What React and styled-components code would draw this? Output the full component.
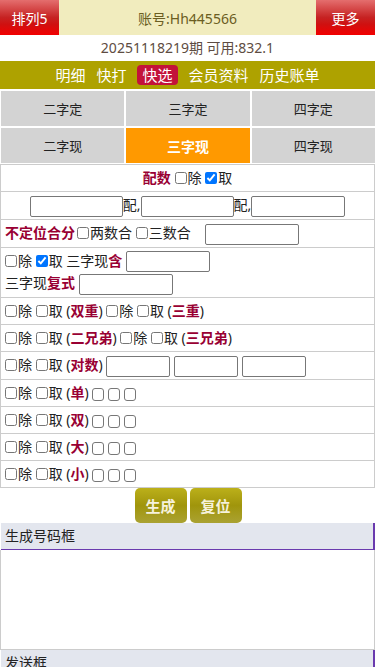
import { createGlobalStyle } from "styled-components";
import styled from "styled-components";

const GlobalStyle = createGlobalStyle`
    body {
        margin: 0;
        background: #fff;
        font-family: "Noto Sans", "Noto Sans CJK SC", sans-serif;
        color: #222;
    }
    * {
        box-sizing: border-box;
    }
`;

const navItems = ["明细", "快打", "快选", "会员资料", "历史账单"];
const tabs = ["二字定", "三字定", "四字定", "二字现", "三字现", "四字现"];

export default function App() {
    return (
        <Page>
            <GlobalStyle />
            <TopBar>
                <RedButton>排列5</RedButton>
                <Account>账号:Hh445566</Account>
                <RedButton>更多</RedButton>
            </TopBar>
            <InfoLine>20251118219期 可用:832.1</InfoLine>
            <NavBar>
                {navItems.map((item) => (
                    <NavItem key={item} $active={item === "快选"}>{item}</NavItem>
                ))}
            </NavBar>
            <TabGrid>
                {tabs.map((tab) => (
                    <Tab key={tab} $active={tab === "三字现"}>{tab}</Tab>
                ))}
            </TabGrid>

            <Table>
                <Row $center>
                    <Em>配数</Em> <Check />除 <Check defaultChecked />取
                </Row>
                <Row $center>
                    <TextBox $w={93} />配,<TextBox $w={93} />配,<TextBox $w={94} />
                </Row>
                <Row>
                    <Em>不定位合分</Em><Check $gap />两数合 <Check />三数合<TextBox $w={94} $ml={14} />
                </Row>
                <Row $tall>
                    <Check />除 <Check defaultChecked />取 三字现<Em>含</Em> <TextBox $w={84} /><br />
                    三字现<Em>复式</Em> <TextBox $w={94} />
                </Row>
                <Row>
                    <Check />除 <Check />取 (<Em>双重</Em>) <Check />除 <Check />取 (<Em>三重</Em>)
                </Row>
                <Row>
                    <Check />除 <Check />取 (<Em>二兄弟</Em>) <Check />除 <Check />取 (<Em>三兄弟</Em>)
                </Row>
                <Row>
                    <Check />除 <Check />取 (<Em>对数</Em>) <TextBox $w={64} /> <TextBox $w={64} /> <TextBox $w={64} />
                </Row>
                {["单", "双", "大", "小"].map((k) => (
                    <Row key={k}>
                        <Check />除 <Check />取 (<Em>{k}</Em>) <Mini /><Mini /><Mini />
                    </Row>
                ))}
            </Table>

            <ButtonBar>
                <ActionButton>生成</ActionButton>
                <ActionButton>复位</ActionButton>
            </ButtonBar>

            <PanelHead>生成号码框</PanelHead>
            <Area />
            <PanelHead>发送框</PanelHead>
            <Area />
        </Page>
    );
}

const Page = styled.div`
    width: 375px;
`;

const TopBar = styled.div`
    display: flex;
    height: 35px;
`;

const RedButton = styled.div`
    width: 59px;
    display: flex;
    align-items: center;
    justify-content: center;
    font-size: 14px;
    color: #fff;
    background: linear-gradient(#e46e6e 0%, #c62222 50%, #d01010 70%, #f20000 100%);
`;

const Account = styled.div`
    flex: 1;
    display: flex;
    align-items: center;
    justify-content: center;
    font-size: 14px;
    color: #6b5d22;
    background-color: #f1ecbe;
`;

const InfoLine = styled.div`
    height: 26px;
    line-height: 26px;
    text-align: center;
    font-size: 14px;
    color: #5e4c42;
`;

const NavBar = styled.div`
    height: 28px;
    display: flex;
    align-items: center;
    justify-content: center;
    gap: 11px;
    background-color: #aea200;
`;

const NavItem = styled.span`
    font-size: 15px;
    line-height: 20px;
    color: #fff;
    padding: 0 ${(p) => (p.$active ? "5px" : "0")};
    border-radius: 4px;
    background-color: ${(p) => (p.$active ? "#c3123a" : "transparent")};
`;

const TabGrid = styled.div`
    display: grid;
    grid-template-columns: 1fr 1fr 1fr;
    grid-auto-rows: 35px;
    gap: 2px;
    padding: 2px 0 0 1px;
    margin-bottom: 1px;
`;

const Tab = styled.div`
    display: flex;
    align-items: center;
    justify-content: center;
    font-size: ${(p) => (p.$active ? "14px" : "13px")};
    font-weight: ${(p) => (p.$active ? "bold" : "normal")};
    color: ${(p) => (p.$active ? "#fff" : "#222")};
    background-color: ${(p) => (p.$active ? "#ff9900" : "#d3d3d3")};
`;

const Table = styled.div`
    border: 1px solid #ccc;
    border-bottom: none;
`;

const Row = styled.div`
    font-size: 14px;
    color: #222;
    line-height: 22px;
    padding: 2px 4px;
    text-align: ${(p) => (p.$center ? "center" : "left")};
    border-bottom: 1px solid #ccc;
    white-space: nowrap;
`;

const Em = styled.span`
    color: #990033;
    font-weight: bold;
`;

const Check = styled.input.attrs({ type: "checkbox" })`
    width: 12px;
    height: 12px;
    margin: 0 1px 0 ${(p) => (p.$gap ? "2px" : "0")};
    vertical-align: -1px;
`;

const TextBox = styled.input.attrs({ type: "text" })`
    width: ${(p) => p.$w}px;
    height: 21px;
    margin: 0 0 0 ${(p) => (p.$ml ? p.$ml : 0)}px;
    padding: 0 3px;
    border: 1px solid #777;
    border-radius: 2px;
    vertical-align: middle;
    font-size: 14px;
`;

const Mini = styled.input.attrs({ type: "text" })`
    width: 12px;
    height: 13px;
    margin: 0 4px 0 0;
    padding: 0;
    border: 1px solid #777;
    border-radius: 3px;
    vertical-align: -1px;
`;

const ButtonBar = styled.div`
    display: flex;
    justify-content: center;
    gap: 3px;
    padding-left: 1px;
`;

const ActionButton = styled.button`
    width: 52px;
    height: 35px;
    border: none;
    border-radius: 5px;
    font-family: inherit;
    font-size: 15px;
    font-weight: bold;
    color: #f6f2dc;
    background: linear-gradient(#bcb01a 0%, #a0950c 50%, #aaa232 100%);
`;

const PanelHead = styled.div`
    height: 27px;
    line-height: 26px;
    margin-left: 1px;
    padding-left: 4px;
    font-size: 14px;
    color: #222;
    background-color: #e3e6ee;
    border-bottom: 1px solid #6a3aae;
    border-right: 2px solid #6a3aae;
`;

const Area = styled.textarea`
    display: block;
    width: 375px;
    height: 100px;
    margin: 0;
    border: 1px solid #ccc;
    border-top: none;
    resize: none;
`;
